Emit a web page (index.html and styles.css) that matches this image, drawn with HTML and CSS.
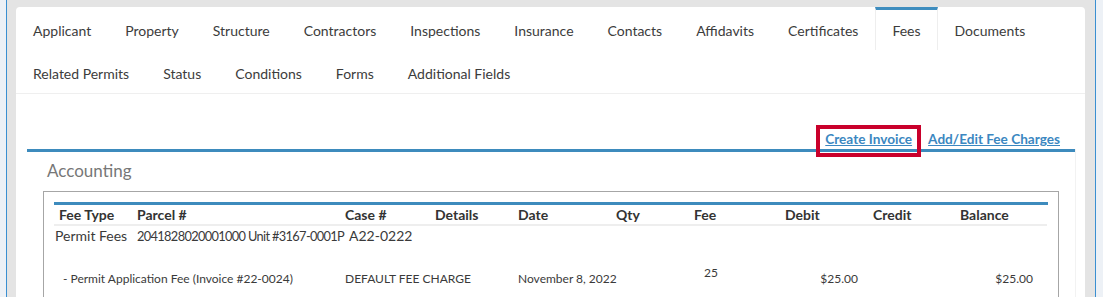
FILE: index.html
```html
<!DOCTYPE html>
<html lang="en">
<head>
<meta charset="utf-8">
<title>Permit Fees</title>
<link rel="stylesheet" href="styles.css">
</head>
<body>
<div class="frame">
  <div class="panel">
    <nav class="tabs">
      <a class="tab">Applicant</a>
      <a class="tab">Property</a>
      <a class="tab">Structure</a>
      <a class="tab">Contractors</a>
      <a class="tab">Inspections</a>
      <a class="tab">Insurance</a>
      <a class="tab">Contacts</a>
      <a class="tab">Affidavits</a>
      <a class="tab">Certificates</a>
      <a class="tab active">Fees</a>
      <a class="tab">Documents</a>
      <a class="tab">Related Permits</a>
      <a class="tab">Status</a>
      <a class="tab">Conditions</a>
      <a class="tab">Forms</a>
      <a class="tab">Additional Fields</a>
    </nav>
    <div class="toolbar">
      <span class="highlight"><a class="link">Create Invoice</a></span>
      <a class="link add">Add/Edit Fee Charges</a>
    </div>
    <section class="accounting">
      <h2 class="title">Accounting</h2>
      <div class="box">
        <div class="grid">
          <div class="th">Fee Type</div>
          <div class="th">Parcel #</div>
          <div class="th">Case #</div>
          <div class="th">Details</div>
          <div class="th">Date</div>
          <div class="th">Qty</div>
          <div class="th">Fee</div>
          <div class="th">Debit</div>
          <div class="th">Credit</div>
          <div class="th">Balance</div>

          <div class="td r1 first">Permit Fees</div>
          <div class="td r1 parcel">2041828020001000 Unit #3167-0001P</div>
          <div class="td r1 case">A22-0222</div>

          <div class="td r2 item">- Permit Application Fee (Invoice #22-0024)</div>
          <div class="td r2 c3">DEFAULT FEE CHARGE</div>
          <div class="td r2 c5">November 8, 2022</div>
          <div class="td r2 c7 fee">25</div>
          <div class="td r2 c8 money debit">$25.00</div>
          <div class="td r2 c10 money balance">$25.00</div>
        </div>
      </div>
    </section>
  </div>
</div>
</body>
</html>
```
FILE: styles.css
```css
* { box-sizing: border-box; }
html, body { margin: 0; padding: 0; height: 100%; }
body {
  background: #edf1f6;
  font-family: "Lato", "Noto Sans", sans-serif;
  color: #3a3a3a;
  overflow: hidden;
}
.frame {
  margin: 0 7px 0 6px;
  height: 100%;
  border-left: 1px solid #3a8fd1;
  border-right: 1px solid #3a8fd1;
  background: #e4e4e4;
  padding: 7px 10px 0 9px;
}
.panel {
  background: #fff;
  height: 100%;
  border-radius: 4px 4px 0 0;
  overflow: hidden;
}
.tabs {
  display: flex;
  flex-wrap: wrap;
  border-bottom: 1px solid #efefef;
}
.tab {
  display: block;
  font-size: 14px;
  line-height: 20px;
  padding: 11px 16px 9px;
  border: 1px solid transparent;
  border-top: 3px solid transparent;
  border-bottom: 0;
  color: #3c3c3c;
  white-space: nowrap;
}
.tab.active {
  border-top-color: #3e8dbf;
  border-left-color: #eeeeee;
  border-right-color: #eeeeee;
}
.toolbar {
  height: 55px;
  display: flex;
  justify-content: flex-end;
  align-items: flex-end;
  padding-right: 25px;
}
.link {
  font-size: 13.6px;
  line-height: 18px;
  font-weight: 700;
  color: #3b87c1;
  text-decoration: underline;
  white-space: nowrap;
}
.highlight {
  position: relative;
  z-index: 1;
  display: block;
  border: 4px solid #c9002b;
  padding: 1px 5px 5px 5px;
  margin-bottom: -8px;
}
.highlight .link { display: block; }
.add { margin: 0 0 1px 7px; }
.accounting {
  margin: 0 10px 0 11px;
  border-top: 3px solid #3d8bbd;
  box-shadow: 1px 0 0 #f2f2f2;
  height: 200px;
}
.title {
  margin: 8px 0 0;
  padding-left: 20px;
  font-size: 17px;
  line-height: 22px;
  font-weight: 400;
  color: #777;
}
.box {
  margin: 9px 16px 0;
  border: 1px solid #a6a6a6;
  border-bottom: 0;
  padding: 10px 10px 0;
  height: 120px;
}
.grid {
  display: grid;
  grid-template-columns: 78px 208px 90px 83px 98px 78px 91px 88px 87px 92px;
  border-top: 3px solid #3d8bbd;
}
.th {
  font-size: 14px;
  line-height: 18px;
  font-weight: 700;
  color: #333;
  padding: 1px 5px 0;
  border-bottom: 2px solid #eeeeee;
  white-space: nowrap;
}
.td {
  font-size: 14px;
  line-height: 18px;
  color: #3a3a3a;
  white-space: nowrap;
  padding: 1px 5px 0;
}
.r1.first { padding-left: 1px; }
.r1.parcel { grid-column: 2; font-size: 12.8px; letter-spacing: -0.65px; }
.r1.case { grid-column: 3; padding-left: 9px; }
.r2 {
  grid-row: 3;
  font-size: 12px;
  line-height: 16px;
  padding-top: 26px;
}
.r2.item { grid-column: 1 / span 2; padding-left: 9px; }
.r2.c3 { grid-column: 3; }
.r2.c5 { grid-column: 5; }
.r2.c7 { grid-column: 7; padding-left: 15px; padding-top: 20px; }
.r2.c8 { grid-column: 8; }
.r2.c10 { grid-column: 10; }
.money { text-align: right; }
.debit { padding-right: 10px; }
.balance { padding-right: 14px; }
```
